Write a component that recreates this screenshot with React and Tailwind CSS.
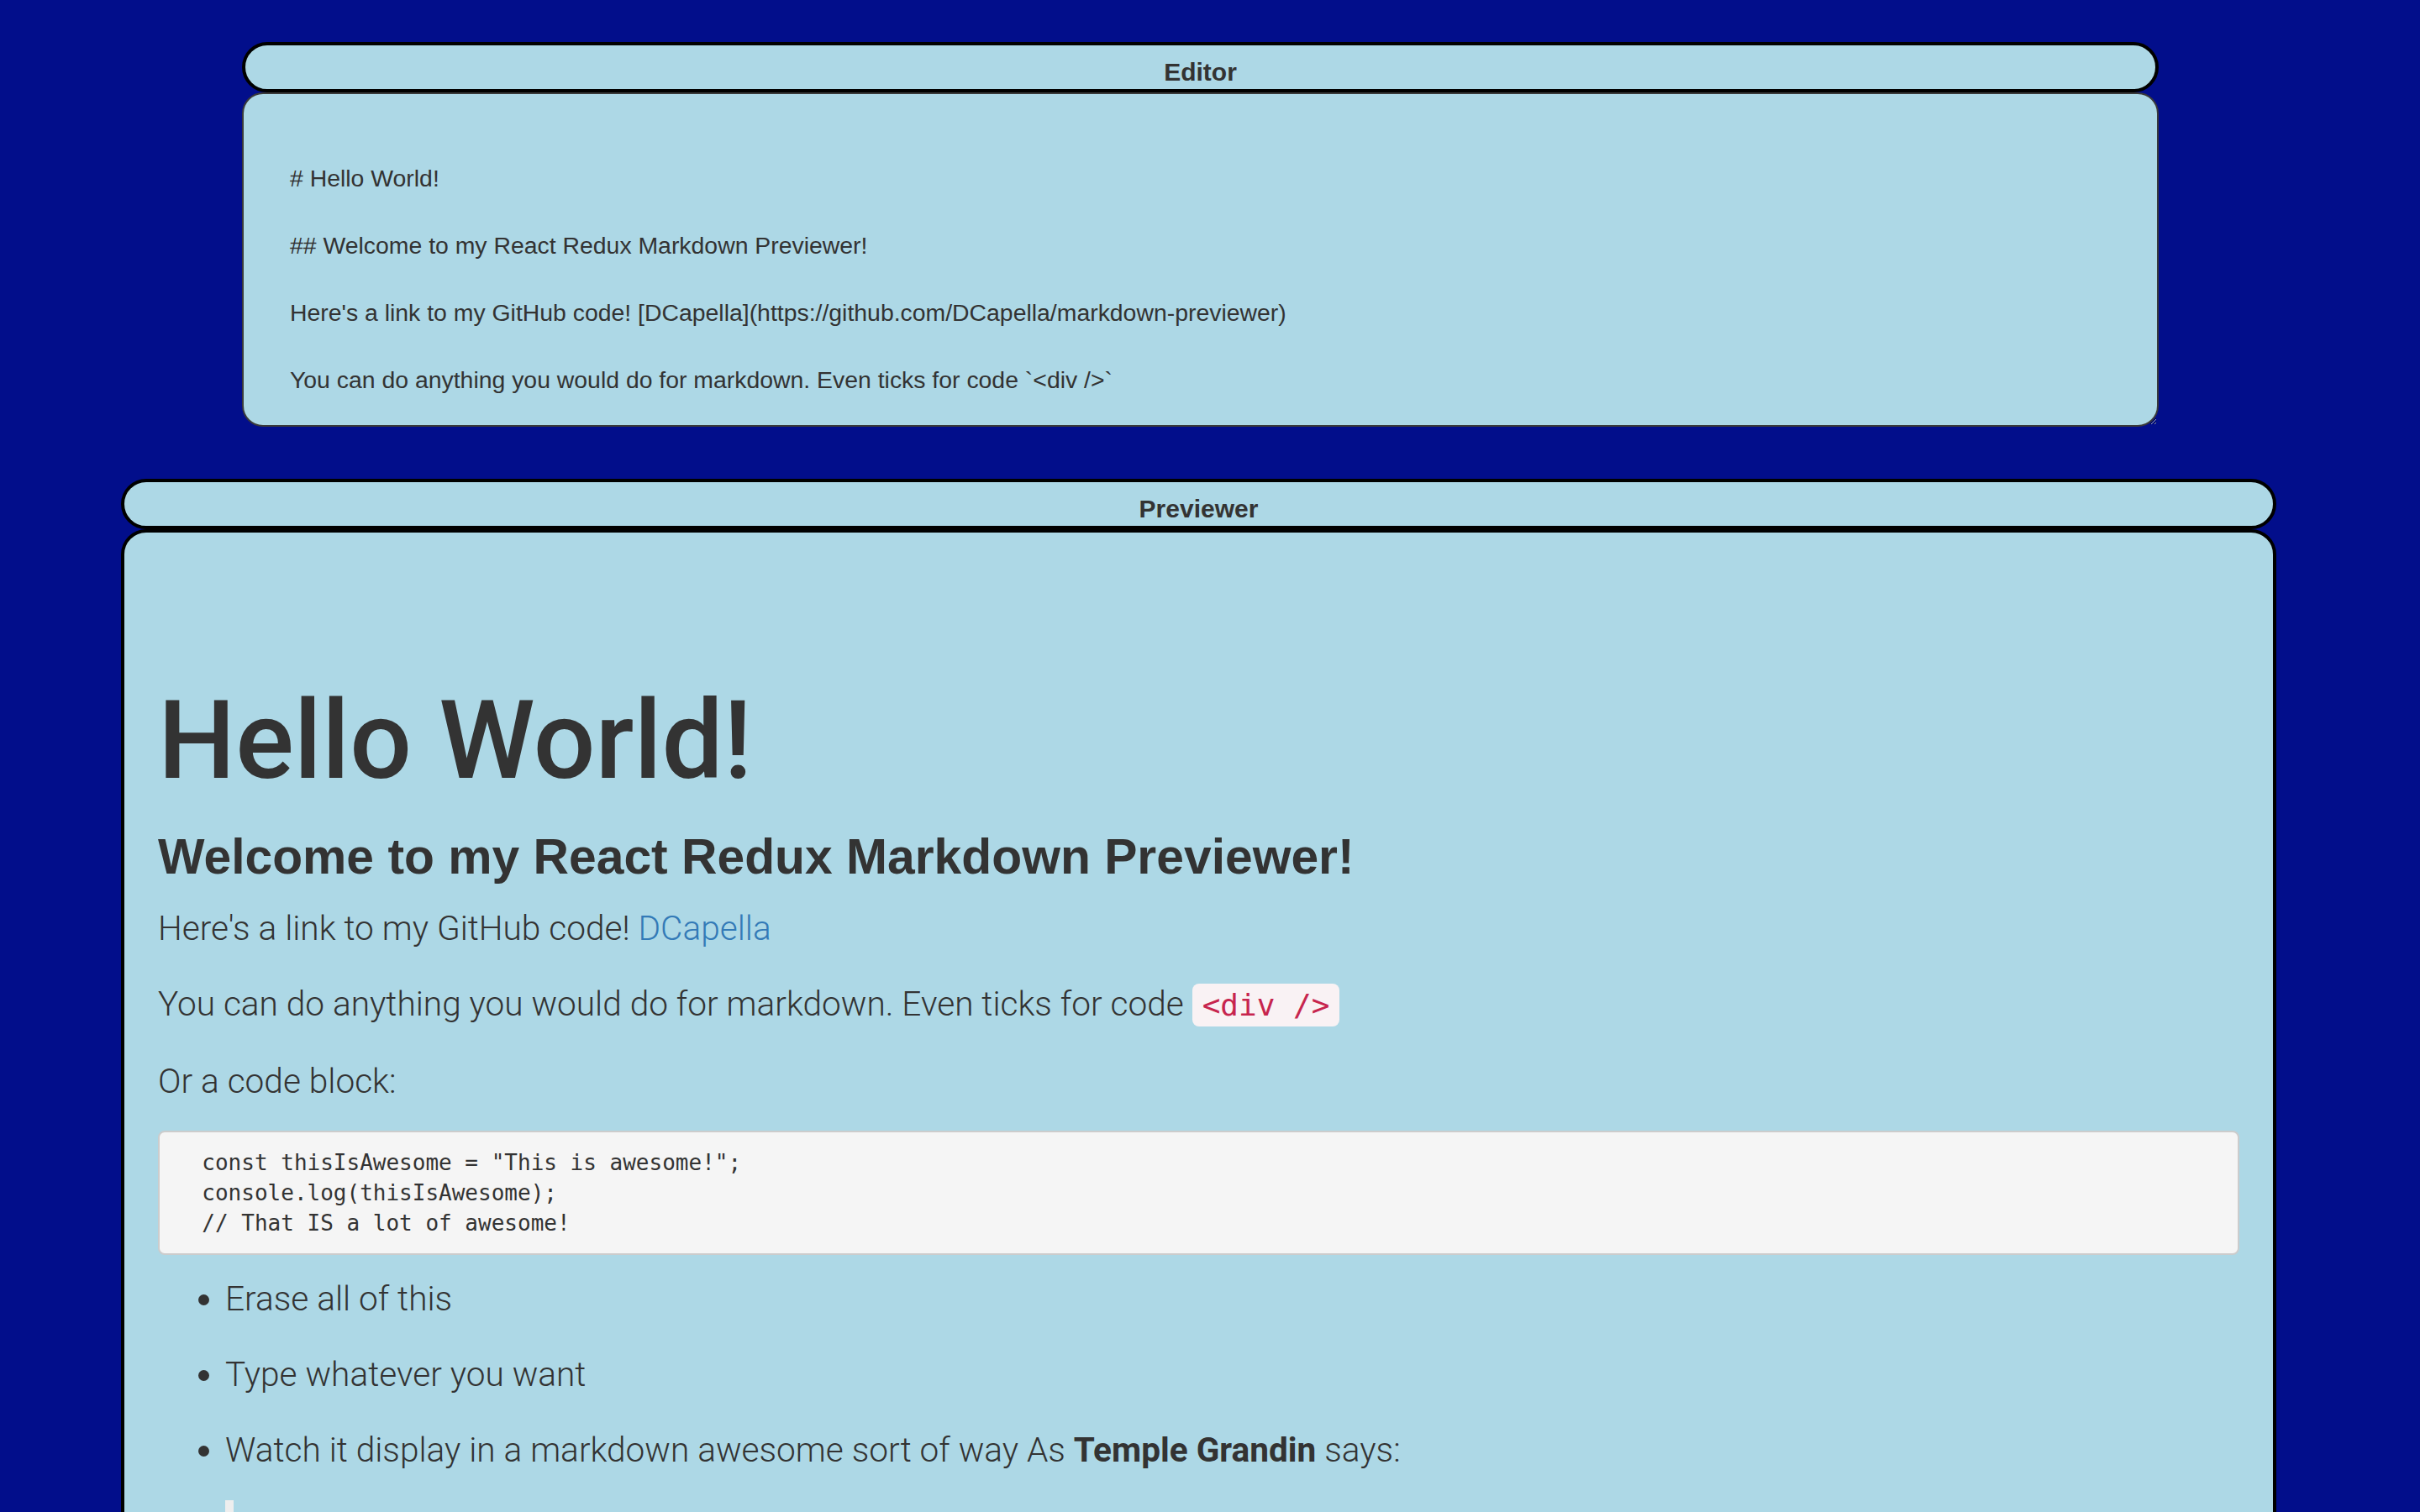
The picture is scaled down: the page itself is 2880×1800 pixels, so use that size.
import { useState } from 'react'

const initialMarkdown = `
# Hello World!

## Welcome to my React Redux Markdown Previewer!

Here's a link to my GitHub code! [DCapella](https://github.com/DCapella/markdown-previewer)

You can do anything you would do for markdown. Even ticks for code \`<div />\`

Or a code block:

\`\`\`
  const thisIsAwesome = "This is awesome!";
  console.log(thisIsAwesome);
  // That IS a lot of awesome!
\`\`\`

- Erase all of this

- Type whatever you want

- Watch it display in a markdown awesome sort of way As **Temple Grandin** says:

> The world needs all kinds of minds.
`

const sans = "font-['Liberation_Sans',Arial,sans-serif]"
const light = "font-['Roboto','Liberation_Sans',sans-serif]"
const mono = "font-['DejaVu_Sans_Mono','Liberation_Mono',monospace]"

function PanelHeader({ title }) {
  return (
    <div className={`h-[60px] rounded-full border-4 border-black bg-[#add8e6] pt-[17px] text-center text-[30px] leading-[30px] font-bold text-[#333] ${sans}`}>
      {title}
    </div>
  )
}

function Preview() {
  return (
    <div className="rounded-[30px] border-4 border-black bg-[#add8e6] px-10 pt-10 pb-20 text-[#333]">
      <h1 className={`mt-[137px] text-[130px] leading-[1.085] font-medium ${light}`}>Hello World!</h1>
      <h2 className={`mt-[36px] mb-[22px] text-[58.8px] leading-[1.1] font-bold ${sans}`}>
        Welcome to my React Redux Markdown Previewer!
      </h2>
      <div className={`text-[40.6px] leading-[60px] font-light ${light}`}>
        <p className="mb-[30px]">
          Here's a link to my GitHub code!{' '}
          <a href="#" className="text-[#337ab7]">DCapella</a>
        </p>
        <p className="mb-[30px]">
          You can do anything you would do for markdown. Even ticks for code{' '}
          <code className={`rounded-[8px] bg-[#f9f2f4] px-[12px] py-[5px] text-[36px] text-[#c7254e] ${mono}`}>&lt;div /&gt;</code>
        </p>
        <p className="mb-[29px]">Or a code block:</p>
        <pre className={`mb-[22px] whitespace-pre rounded-[8px] border-2 border-[#ccc] bg-[#f5f5f5] px-[19px] py-[18px] text-[26px] leading-[36px] font-normal text-[#333] ${mono}`}>
{`  const thisIsAwesome = "This is awesome!";
  console.log(thisIsAwesome);
  // That IS a lot of awesome!`}
        </pre>
        <ul className="list-disc pl-[80px]">
          <li><p className="mb-[30px]">Erase all of this</p></li>
          <li><p className="mb-[30px]">Type whatever you want</p></li>
          <li>
            <p className="mb-[30px]">
              Watch it display in a markdown awesome sort of way As <strong className="font-bold">Temple Grandin</strong> says:
            </p>
            <blockquote className="border-l-[10px] border-[#eee] px-10 py-5">
              <p>The world needs all kinds of minds.</p>
            </blockquote>
          </li>
        </ul>
      </div>
    </div>
  )
}

export default function App() {
  const [markdown, setMarkdown] = useState(initialMarkdown)

  return (
    <div className="h-screen w-full overflow-hidden bg-[#020e8b]">
      <div className="ml-[288px] w-[2281px] pt-[50px]">
        <PanelHeader title="Editor" />
        <textarea
          value={markdown}
          onChange={(e) => setMarkdown(e.target.value)}
          spellCheck={false}
          className={`block h-[398px] w-full resize overflow-hidden rounded-[25px] border-2 border-[#3a3a3a] bg-[#add8e6] px-[55px] pt-[40px] text-[28.4px] leading-[40px] text-[#333] outline-none ${sans}`}
        />
      </div>
      <div className="ml-[144px] mt-[62px] w-[2565px]">
        <PanelHeader title="Previewer" />
        <Preview />
      </div>
    </div>
  )
}
